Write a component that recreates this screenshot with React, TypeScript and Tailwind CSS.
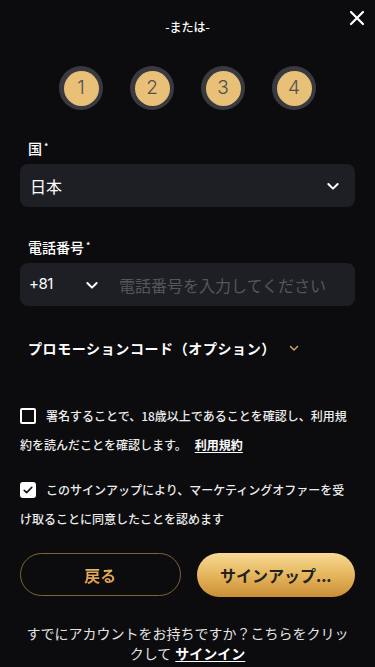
import React from "react";

const jp = { fontFamily: '"Noto Sans CJK JP", "Noto Sans", sans-serif' };

function Chevron({ className }: { className?: string }) {
  return (
    <svg viewBox="0 0 24 24" className={className} fill="none" stroke="currentColor" strokeWidth={3} strokeLinecap="round" strokeLinejoin="round">
      <path d="M5 9l7 7 7-7" />
    </svg>
  );
}

function Step({ n }: { n: number }) {
  return (
    <div className="w-[44px] h-[44px] rounded-full bg-[#393a40] flex items-center justify-center">
      <div className="w-[35px] h-[35px] rounded-full bg-[#e8c077] flex items-center justify-center text-[19px] font-light text-[#505050]" style={{ fontFamily: "Inter, sans-serif" }}>
        {n}
      </div>
    </div>
  );
}

export default function App() {
  return (
    <div className="min-h-screen bg-[#0c0c0f] px-5 relative text-white" style={jp}>
      {/* close button */}
      <button className="absolute right-[10px] top-[10px] text-white">
        <svg viewBox="0 0 16 16" className="w-[16px] h-[16px]" fill="none" stroke="currentColor" strokeWidth={2.2} strokeLinecap="round">
          <path d="M2 2l12 12M14 2L2 14" />
        </svg>
      </button>

      <p className="pt-[19px] text-center text-[12px] leading-[16px] font-medium">-または-</p>

      {/* steps */}
      <div className="mt-[31px] flex justify-center gap-[27px]">
        <Step n={1} />
        <Step n={2} />
        <Step n={3} />
        <Step n={4} />
      </div>

      {/* country */}
      <p className="mt-[28px] pl-[8px] text-[14px] leading-[20px] font-medium">
        国<sup className="text-[9px] ml-[2px]">*</sup>
      </p>
      <div className="mt-[6px] h-[43px] rounded-[8px] bg-[#1e1f24] flex items-center justify-between pl-[10px] pr-[14px]">
        <span className="text-[16px]">日本</span>
        <Chevron className="w-[16px] h-[16px] text-white" />
      </div>

      {/* phone */}
      <p className="mt-[30px] pl-[8px] text-[14px] leading-[20px] font-medium">
        電話番号<sup className="text-[9px] ml-[2px]">*</sup>
      </p>
      <div className="mt-[6px] h-[43px] rounded-[8px] bg-[#1e1f24] flex items-center pl-[9px]">
        <span className="text-[15px] tracking-[-0.5px] w-[55px]" style={{ fontFamily: "Inter, sans-serif" }}>+81</span>
        <Chevron className="w-[16px] h-[16px] text-white" />
        <span className="ml-[19px] text-[16px] text-[#55565c]">電話番号を入力してください</span>
      </div>

      {/* promo */}
      <div className="mt-[32px] pl-[8px] flex items-center h-[20px]">
        <span className="text-[14px] font-bold tracking-[0.6px]">プロモーションコード（オプション）</span>
        <Chevron className="ml-[12px] w-[12px] h-[12px] text-[#c9a45a]" />
      </div>

      {/* agreements */}
      <p className="mt-[43px] text-[12px] leading-[29px] font-medium text-[#ececec]">
        <span className="inline-block align-middle w-[16px] h-[16px] border-2 border-white rounded-[2px] mr-[10px] -mt-[3px]" />
        署名することで、18歳以上であることを確認し、利用規約を読んだことを確認します。
        <a className="ml-[8px] font-bold text-white underline underline-offset-2">利用規約</a>
      </p>
      <p className="mt-[16px] text-[12px] leading-[29px] font-medium text-[#ececec]">
        <span className="inline-flex align-middle items-center justify-center w-[16px] h-[16px] bg-white rounded-[3px] mr-[10px] -mt-[3px]">
          <svg viewBox="0 0 16 16" className="w-[12px] h-[12px]" fill="none" stroke="#1a1a1a" strokeWidth={2.2} strokeLinecap="round" strokeLinejoin="round">
            <path d="M3 8.5l3.2 3L13 4.5" />
          </svg>
        </span>
        このサインアップにより、マーケティングオファーを受け取ることに同意したことを認めます
      </p>

      {/* buttons */}
      <div className="mt-[20px] flex gap-4">
        <button className="flex-1 h-[43px] rounded-full border border-[#7d6536] flex items-center justify-center">
          <span className="text-[16px] font-bold bg-gradient-to-b from-[#f1c577] to-[#d8903f] bg-clip-text text-transparent">戻る</span>
        </button>
        <button className="flex-1 h-[44px] rounded-full bg-gradient-to-b from-[#f6da94] via-[#e6b65c] to-[#c98e36] flex items-center justify-center text-[16px] font-bold text-[#222]">
          サインアップ...
        </button>
      </div>

      {/* sign in */}
      <p className="mt-[26px] pb-[10px] text-center text-[14px] leading-[20px] text-[#e2e2e2]">
        すでにアカウントをお持ちですか？こちらをクリックして
        <a className="ml-[4px] font-bold text-white underline underline-offset-2">サインイン</a>
      </p>
    </div>
  );
}
